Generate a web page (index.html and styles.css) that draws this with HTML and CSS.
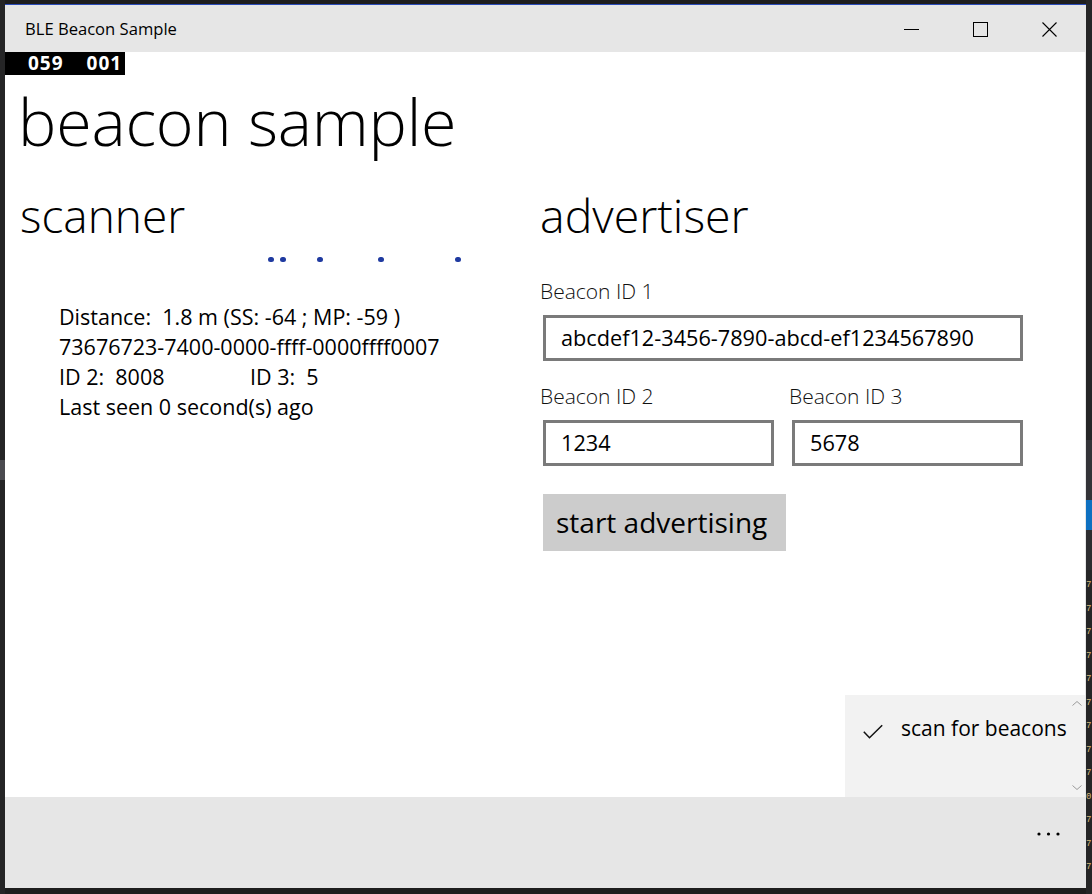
FILE: index.html
```html
<!DOCTYPE html>
<html lang="en">
<head>
<meta charset="utf-8">
<title>BLE Beacon Sample</title>
<link rel="stylesheet" href="styles.css">
</head>
<body>
<div class="desktop">
  <div class="editor-strip right">
    <div class="strip-block gray"></div>
    <div class="strip-block blue"></div>
    <div class="strip-block gray2"></div>
    <div class="strip-code">7<br>7<br>7<br>7<br>7<br>7<br>7<br>7<br>7<br>0<br>7<br>7<br>7</div>
  </div>
  <div class="editor-strip left">
    <div class="strip-block lgray"></div>
  </div>
</div>
<div class="window">
  <header class="titlebar">
    <span class="title">BLE Beacon Sample</span>
    <div class="caption-buttons">
      <div class="cap-btn">
        <svg width="15" height="15" viewBox="0 0 15 15"><line x1="0" y1="7.5" x2="15" y2="7.5" stroke="#000" stroke-width="1"/></svg>
      </div>
      <div class="cap-btn">
        <svg width="15" height="15" viewBox="0 0 15 15"><rect x="0.5" y="0.5" width="14" height="14" fill="none" stroke="#000" stroke-width="1"/></svg>
      </div>
      <div class="cap-btn">
        <svg width="15" height="15" viewBox="0 0 15 15"><path d="M0.5 0.5 L14.5 14.5 M14.5 0.5 L0.5 14.5" stroke="#000" stroke-width="1.1" fill="none"/></svg>
      </div>
    </div>
  </header>
  <main class="content">
    <div class="fps"><span>059</span><span>001</span></div>
    <h1 class="page-title">beacon sample</h1>
    <div class="columns">
      <section class="scanner">
        <h2 class="section-title">scanner</h2>
        <div class="progress">
          <span class="dot" style="left:248px"></span>
          <span class="dot" style="left:260px"></span>
          <span class="dot" style="left:297px"></span>
          <span class="dot" style="left:358px"></span>
          <span class="dot" style="left:435px"></span>
        </div>
        <div class="beacon">
          <div class="line">Distance:&nbsp; 1.8 m (SS: -64 ; MP: -59 )</div>
          <div class="line">73676723-7400-0000-ffff-0000ffff0007</div>
          <div class="line ids"><span class="id2">ID 2:&nbsp; 8008</span><span>ID 3:&nbsp; 5</span></div>
          <div class="line">Last seen 0 second(s) ago</div>
        </div>
      </section>
      <section class="advertiser">
        <h2 class="section-title">advertiser</h2>
        <div class="field first">
          <div class="label">Beacon ID 1</div>
          <div class="textbox wide">abcdef12-3456-7890-abcd-ef1234567890</div>
        </div>
        <div class="pair">
          <div class="field">
            <div class="label">Beacon ID 2</div>
            <div class="textbox">1234</div>
          </div>
          <div class="field">
            <div class="label">Beacon ID 3</div>
            <div class="textbox">5678</div>
          </div>
        </div>
        <button class="action">start advertising</button>
      </section>
    </div>
    <div class="flyout">
      <svg class="chev up" width="10" height="5" viewBox="0 0 10 5"><path d="M0.5 4.5 L5 0.5 L9.5 4.5" fill="none" stroke="#9a9a9a" stroke-width="1"/></svg>
      <div class="menu-item">
        <svg class="check" width="20" height="15" viewBox="0 0 20 15"><path d="M0.8 7.8 L6.5 13.8 L19.2 1.2" fill="none" stroke="#111" stroke-width="1.5"/></svg>
        <span class="menu-text">scan for beacons</span>
      </div>
      <svg class="chev down" width="10" height="5" viewBox="0 0 10 5"><path d="M0.5 0.5 L5 4.5 L9.5 0.5" fill="none" stroke="#9a9a9a" stroke-width="1"/></svg>
    </div>
  </main>
  <footer class="appbar">
    <svg class="more" width="23" height="4" viewBox="0 0 23 4"><circle cx="2" cy="2" r="1.6" fill="#000"/><circle cx="11.5" cy="2" r="1.6" fill="#000"/><circle cx="21" cy="2" r="1.6" fill="#000"/></svg>
  </footer>
</div>
</body>
</html>
```
FILE: styles.css
```css
html, body {
  margin: 0;
  height: 100%;
}

body {
  background: #1e1e1e;
  font-family: "Open Sans", "Noto Sans", sans-serif;
  overflow: hidden;
  position: relative;
}

/* desktop behind the window */
.desktop {
  position: absolute;
  inset: 0;
}

.editor-strip {
  position: absolute;
  top: 0;
  bottom: 0;
  background: #252526;
}

.editor-strip.right {
  left: 1086px;
  width: 6px;
}

.editor-strip.left {
  left: 0;
  width: 5px;
}

.strip-block {
  position: absolute;
  left: 0;
  right: 0;
}

.strip-block.gray { top: 440px; height: 60px; background: #333337; }
.strip-block.blue { top: 500px; height: 30px; background: #0e70c0; }
.strip-block.gray2 { top: 530px; height: 40px; background: #2d2d30; }
.strip-block.lgray { top: 460px; height: 20px; background: #4a4a4f; }

.strip-code {
  position: absolute;
  top: 574px;
  left: 0;
  font-family: "Liberation Mono", monospace;
  font-size: 9px;
  line-height: 23.5px;
  color: #d7ba7d;
}

/* window */
.window {
  position: relative;
  margin: 4px 0 0 5px;
  width: 1081px;
  height: 884px;
  display: flex;
  flex-direction: column;
  border-top: 1px solid #2a4bb8;
  box-sizing: border-box;
  background: #fff;
}

.titlebar {
  height: 47px;
  flex: none;
  background: #e6e6e6;
  display: flex;
  align-items: center;
  justify-content: space-between;
}

.title {
  padding-left: 20px;
  font-size: 16.6px;
  color: #000;
  line-height: 47px;
}

.caption-buttons {
  display: flex;
  padding-right: 2px;
}

.cap-btn {
  width: 69px;
  height: 47px;
  display: flex;
  align-items: center;
  justify-content: center;
}

.cap-btn svg {
  display: block;
  margin-top: 1px;
}

/* content */
.content {
  flex: 1;
  position: relative;
  background: #fff;
  border-right: 1px solid #e6e6e6;
  color: #000;
}

.fps {
  width: 120px;
  height: 23px;
  background: #000;
  color: #fff;
  font-weight: 700;
  font-size: 19px;
  letter-spacing: 1px;
  line-height: 23px;
  display: flex;
  gap: 23px;
  padding-left: 23px;
  box-sizing: border-box;
}

.page-title {
  margin: 10px 0 0 13px;
  font-weight: 300;
  font-size: 64.5px;
  line-height: 72px;
  letter-spacing: -0.2px;
}

.columns {
  display: grid;
  grid-template-columns: 520px 1fr;
  padding-left: 15px;
  margin-top: 31px;
}

.section-title {
  margin: 0;
  font-weight: 300;
  font-size: 46.5px;
  line-height: 54px;
}

.scanner .section-title {
  font-size: 46px;
}

.progress {
  position: relative;
  height: 10px;
  margin-top: 12px;
}

.dot {
  position: absolute;
  top: 2.5px;
  width: 5.5px;
  height: 5.5px;
  border-radius: 50%;
  background: #1f3aa0;
}

.beacon {
  margin-top: 38px;
  padding-left: 39px;
  font-size: 21.5px;
  line-height: 30px;
}

.ids {
  display: flex;
}

.id2 {
  width: 191px;
}

.field {
  display: flex;
  flex-direction: column;
}

.field.first {
  margin-top: 35px;
}

.label {
  font-size: 21px;
  font-weight: 300;
  line-height: 28px;
  color: #111;
}

.textbox {
  margin: 10px 0 0 3px;
  height: 46px;
  box-sizing: border-box;
  border: 3px solid #7a7a7a;
  padding-left: 15px;
  font-size: 21.7px;
  line-height: 40px;
  background: #fff;
}

.textbox.wide {
  width: 480px;
}

.pair {
  display: grid;
  grid-template-columns: 234px 234px;
  column-gap: 15px;
  margin-top: 21px;
}

.action {
  margin: 28px 0 0 3px;
  width: 243px;
  height: 57px;
  border: none;
  background: #cccccc;
  font-family: inherit;
  font-size: 28px;
  line-height: 57px;
  text-align: left;
  padding: 0 0 0 13px;
  color: #000;
}

/* flyout menu */
.flyout {
  position: absolute;
  right: 0;
  bottom: 0;
  width: 240px;
  height: 102px;
  background: #f2f2f2;
}

.chev {
  position: absolute;
  left: 227px;
  display: block;
}

.chev.up { top: 6px; }
.chev.down { top: 90px; }

.menu-item {
  display: flex;
  align-items: center;
  padding: 18px 0 0 18px;
  height: 30px;
}

.check {
  display: block;
  flex: none;
  margin-top: 7px;
}

.menu-text {
  margin-left: 18px;
  font-size: 21px;
  line-height: 30px;
}

/* app bar */
.appbar {
  height: 91px;
  flex: none;
  background: #e6e6e6;
  display: flex;
  justify-content: flex-end;
  align-items: flex-start;
  padding: 35px 26px 0 0;
  box-sizing: border-box;
}

.more {
  display: block;
}
```
